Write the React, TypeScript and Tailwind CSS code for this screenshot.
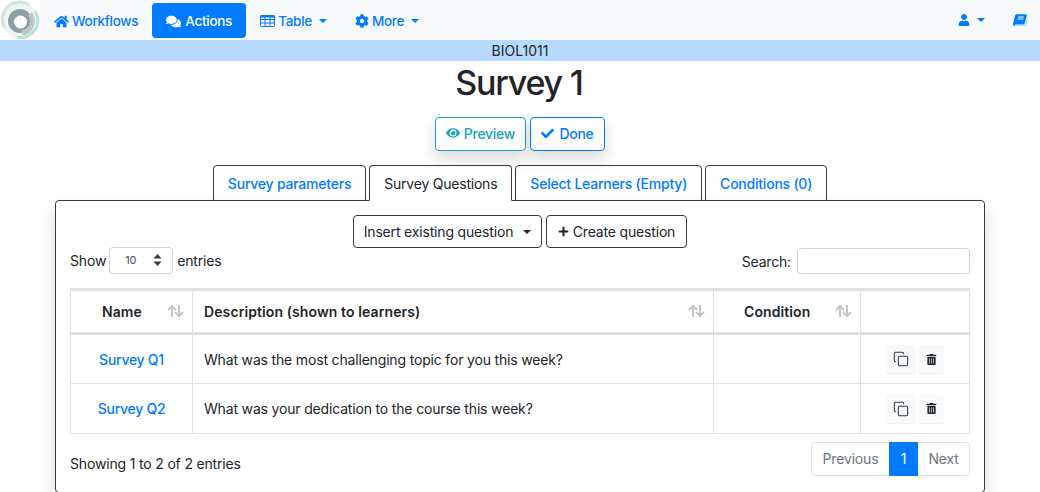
import React from 'react';
import { FaHome, FaComments, FaCog, FaUser, FaEye, FaCheck, FaPlus, FaTrashAlt } from 'react-icons/fa';
import { Copy } from 'lucide-react';

const Caret = ({ className = '' }: { className?: string }) => (
  <span className={`inline-block w-0 h-0 border-x-[4px] border-x-transparent border-t-[4px] border-t-current ${className}`} />
);

const SortIcon = () => (
  <svg width="17" height="14" viewBox="0 0 17 14" fill="none" stroke="#c4c5c6" strokeWidth="2" className="shrink-0 -mt-[2px]">
    <path d="M5 13V2M1 6l4-4 4 4" />
    <path d="M12 1v11M8 8l4 4 4-4" />
  </svg>
);

const TableIcon = () => (
  <svg width="15" height="12" viewBox="0 0 15 12" fill="none" stroke="currentColor" strokeWidth="1" className="shrink-0">
    <rect x="0.5" y="0.5" width="14" height="11" rx="1" />
    <path d="M0 1.5h15" strokeWidth="2" />
    <path d="M0 4.5h15M0 8h15M5 1v10M10 1v10" />
  </svg>
);

const BookIcon = () => (
  <svg width="14" height="13" viewBox="0 0 14 13" fill="currentColor" className="shrink-0">
    <path d="M3.6.2h9.2c.8 0 1.2.5 1 1.2L11.6 9.6c-.2.6-.6.9-1.2.9H2.3c-.9 0-.9 1.3.1 1.3h9.3c.4 0 .7-.2.8-.6l1.6-6.6.3.2-1.8 7.2H2.1C.6 12 -.3 11 .1 9.6L2.3 1.3C2.5.6 3 .2 3.6.2z" />
    <path d="M5.2 3h5.6M4.7 5h5.6" stroke="#fff" strokeWidth="1" />
  </svg>
);

const Logo = () => (
  <svg width="40" height="40" viewBox="0 0 40 40" className="shrink-0">
    <rect width="40" height="40" fill="#fff" />
    <circle cx="20" cy="20" r="18.5" fill="#eef5f3" />
    <path d="M5 28A17 17 0 0 1 29 5" fill="none" stroke="#d6e0de" strokeWidth="3" />
    <path d="M35 11a17 17 0 0 1-18 26" fill="none" stroke="#b5e3d8" strokeWidth="3" />
    <circle cx="20" cy="21" r="13" fill="#f2f6f5" />
    <circle cx="20" cy="21" r="12" fill="#8aa0a1" />
    <path d="M30 14a12 12 0 0 1-8 19" fill="none" stroke="#bfc4c6" strokeWidth="5" />
    <circle cx="20.5" cy="22" r="6.5" fill="#fff" />
  </svg>
);

const rows = [
  { name: 'Survey Q1', description: 'What was the most challenging topic for you this week?' },
  { name: 'Survey Q2', description: 'What was your dedication to the course this week?' },
];

export default function App() {
  return (
    <div className="w-[1040px] h-[492px] overflow-hidden bg-white text-[14px] tracking-[-0.17px] text-[#212529] font-['Inter',sans-serif]">
      <nav className="h-10 bg-[#f8f9fa] flex items-center text-[13.5px] tracking-[-0.3px] text-[#007bff] font-medium">
        <Logo />
        <a className="ml-[14px] pt-[2px] flex items-center gap-[3px]">
          <FaHome className="text-[15px]" /> Workflows
        </a>
        <a className="ml-[14px] pt-[2px] h-[35px] w-[94px] rounded bg-[#007bff] text-white flex items-center justify-center gap-[4px]">
          <FaComments className="text-[15px]" /> Actions
        </a>
        <a className="ml-[14px] pt-[2px] flex items-center gap-[3px]">
          <TableIcon /> Table <Caret className="ml-[4px]" />
        </a>
        <a className="ml-[28px] pt-[2px] flex items-center gap-[3px]">
          <FaCog className="text-[14px]" /> More <Caret className="ml-[4px]" />
        </a>
        <div className="ml-auto flex items-center">
          <FaUser className="text-[12px]" />
          <Caret className="ml-[7px]" />
          <span className="ml-[28px] mr-[13px]">
            <BookIcon />
          </span>
        </div>
      </nav>
      <div className="h-[21px] bg-[#b8daff] text-center leading-[21px] tracking-normal text-[#212529]">BIOL1011</div>
      <h1 className="text-center text-[34px] tracking-[-1.2px] font-medium leading-[42px] mt-[1px] pr-[2px]">Survey 1</h1>

      <div className="mt-[13px] flex justify-center gap-[4px] font-medium tracking-[-0.27px]">
        <button className="h-[34px] w-[91px] pb-[2px] rounded border border-[#17a2b8] text-[#17a2b8] flex items-center justify-center gap-[4px] shadow-[0_8px_16px_rgba(0,0,0,0.15)]">
          <FaEye className="text-[14px]" /> Preview
        </button>
        <button className="h-[34px] w-[75px] pb-[2px] rounded border border-[#007bff] text-[#007bff] flex items-center justify-center gap-[5px] shadow-[0_8px_16px_rgba(0,0,0,0.15)]">
          <FaCheck className="text-[13px]" /> Done
        </button>
      </div>

      <div className="mt-[14px] flex justify-center gap-[3px] relative z-10 -mb-px font-medium tracking-[-0.22px]">
        {['Survey parameters', 'Survey Questions', 'Select Learners (Empty)', 'Conditions (0)'].map((tab, i) => (
          <div
            key={tab}
            className={`h-[36px] px-[14px] leading-[36px] rounded-t border border-[#343a40] ${
              i === 1 ? 'border-b-white bg-white text-[#212529] font-normal' : 'text-[#007bff]'
            }`}
          >
            {tab}
          </div>
        ))}
      </div>

      <section className="mx-[55px] h-[293px] rounded border border-[#343a40] px-[14px] pt-[14px] shadow-[0_8px_16px_rgba(0,0,0,0.15)]">
        <div className="flex justify-center gap-[4px]">
          <button className="h-[33px] w-[189px] rounded border border-[#343a40] flex items-center justify-center gap-[10px]">
            Insert existing question <Caret />
          </button>
          <button className="h-[33px] w-[141px] rounded border border-[#343a40] flex items-center justify-center gap-[4px]">
            <FaPlus className="text-[11px]" /> Create question
          </button>
        </div>

        <div className="flex items-center justify-between h-[26px]">
          <div className="flex items-center -mt-[2px]">
            Show
            <div className="ml-[3px] mr-[4px] w-[64px] h-[27px] rounded border border-[#ced4da] flex items-center justify-between pl-[15px] pr-[10px] text-[11px] text-[#495057]">
              10
              <svg width="9" height="12" viewBox="0 0 9 12" fill="#343a40">
                <path d="M4.5 0 8.5 4.5H.5zM4.5 12 .5 7.5h8z" />
              </svg>
            </div>
            entries
          </div>
          <div className="flex items-center">
            Search:
            <div className="ml-[6px] w-[173px] h-[26px] rounded border border-[#ced4da]" />
          </div>
        </div>

        <table className="mt-[14px] w-[899px] table-fixed border-collapse border border-[#dee2e6] border-t-[3px]">
          <colgroup>
            <col className="w-[122px]" />
            <col className="w-[521px]" />
            <col className="w-[147px]" />
            <col className="w-[109px]" />
          </colgroup>
          <thead>
            <tr className="h-[44px] border-b-[3px] border-[#dee2e6] font-semibold tracking-[0.1px]">
              <th className="border-r border-[#dee2e6] font-semibold">
                <div className="flex items-center pl-[31px] pr-[8px] justify-between">
                  Name <SortIcon />
                </div>
              </th>
              <th className="border-r border-[#dee2e6] font-semibold">
                <div className="flex items-center pl-[11px] pr-[8px] justify-between">
                  Description (shown to learners) <SortIcon />
                </div>
              </th>
              <th className="border-r border-[#dee2e6] font-semibold">
                <div className="flex items-center pl-[30px] pr-[8px] justify-between">
                  Condition <SortIcon />
                </div>
              </th>
              <th />
            </tr>
          </thead>
          <tbody>
            {rows.map((row) => (
              <tr key={row.name} className="h-[50px] border-b border-[#dee2e6]">
                <td className="border-r border-[#dee2e6] text-center text-[#007bff] font-medium tracking-[-0.27px]">{row.name}</td>
                <td className="border-r border-[#dee2e6] pl-[11px]">{row.description}</td>
                <td className="border-r border-[#dee2e6]" />
                <td>
                  <div className="flex justify-center gap-[4px]">
                    <button className="w-[29px] h-[28px] rounded-[3px] bg-[#f8f9fa] flex items-center justify-center shadow-[0_1px_1px_rgba(0,0,0,0.08)]">
                      <Copy size={16} strokeWidth={1.6} className="text-[#343a40]" />
                    </button>
                    <button className="w-[25px] h-[28px] rounded-[3px] bg-[#f8f9fa] flex items-center justify-center shadow-[0_1px_1px_rgba(0,0,0,0.08)]">
                      <FaTrashAlt className="text-[11px] text-[#212529]" />
                    </button>
                  </div>
                </td>
              </tr>
            ))}
          </tbody>
        </table>

        <div className="mt-[8px] flex items-start justify-between">
          <div className="mt-[11px]">Showing 1 to 2 of 2 entries</div>
          <div className="flex h-[34px] rounded border border-[#dee2e6] text-[#6c757d] leading-[32px]">
            <div className="w-[77px] text-center">Previous</div>
            <div className="w-[29px] -my-px h-[34px] leading-[34px] bg-[#007bff] text-white text-center">1</div>
            <div className="w-[51px] text-center">Next</div>
          </div>
        </div>
      </section>
    </div>
  );
}
